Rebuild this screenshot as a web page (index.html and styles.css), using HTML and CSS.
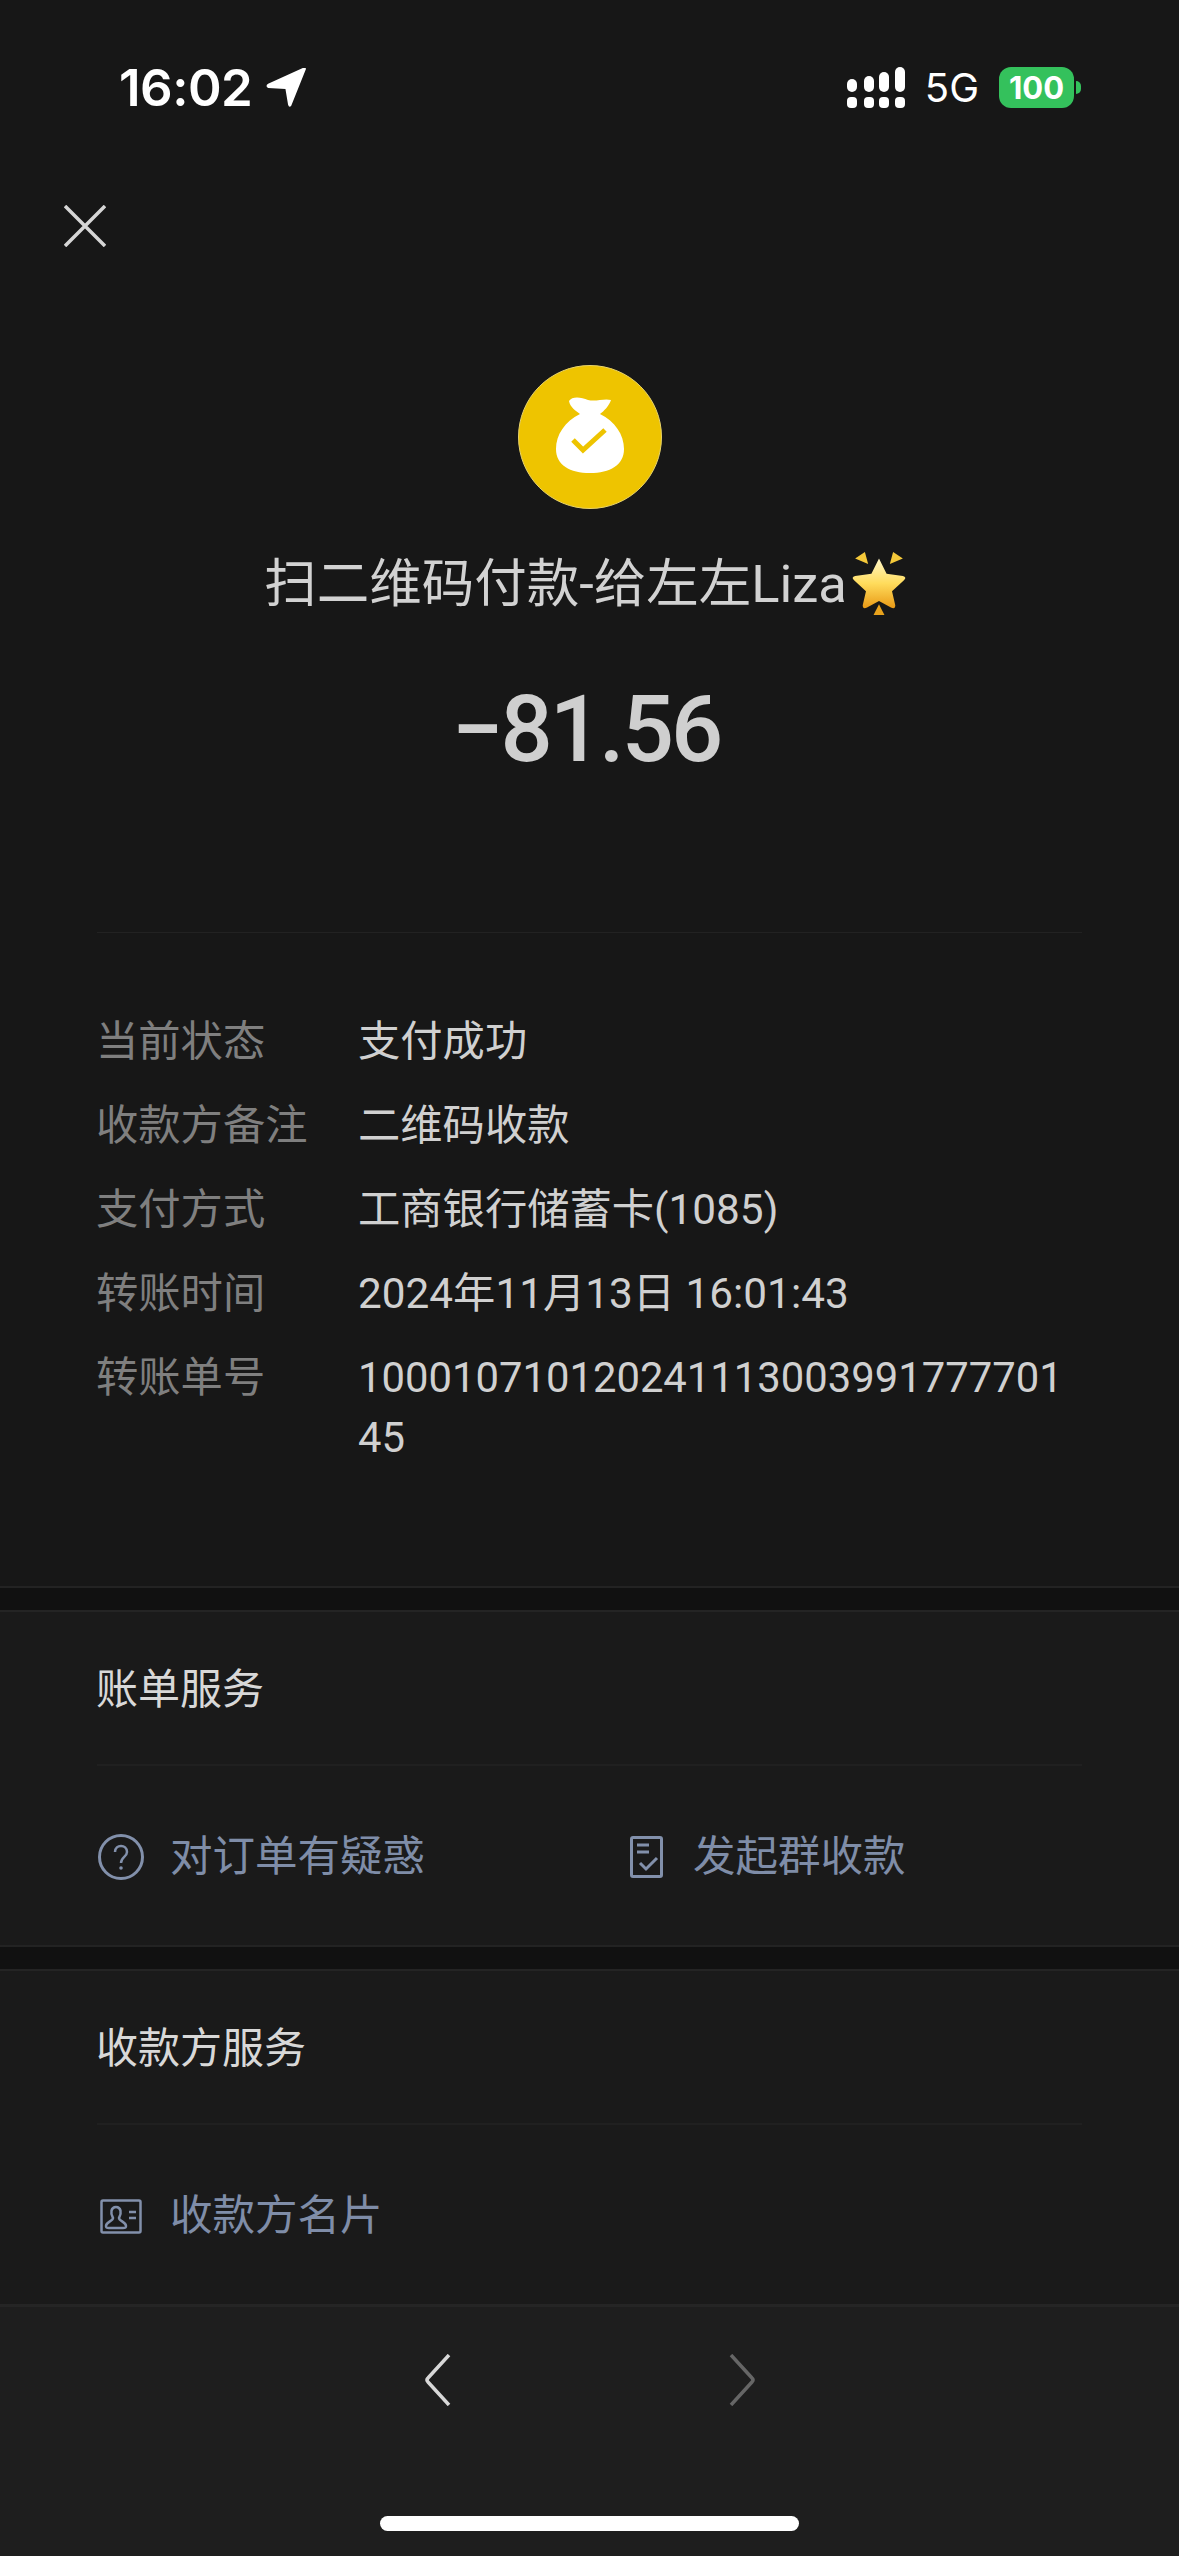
FILE: index.html
```html
<!DOCTYPE html>
<html lang="zh-CN">
<head>
<meta charset="utf-8">
<title>账单详情</title>
<link rel="stylesheet" href="styles.css">
</head>
<body>
<div class="page">
  <header class="status">
    <div class="status-left">
      <span class="time">16:02</span>
      <svg class="loc" viewBox="0 0 39 38"><path d="M38 1 L24 36 Q22 38 21 35 L18.500 20 L2 19 Q-1 17 2 15 L35 0 Q38 -1 38 1Z" fill="#fff"/></svg>
    </div>
    <div class="status-right">
      <svg class="signal" viewBox="0 0 58 41" fill="#fff">
        <rect x="0" y="12" width="10" height="13" rx="5"/><rect x="17" y="9" width="10" height="16" rx="5"/><rect x="32" y="5" width="10" height="20" rx="5"/><rect x="48" y="0" width="10" height="25" rx="5"/>
        <rect x="0" y="30" width="10" height="11" rx="4"/><rect x="17" y="30" width="10" height="11" rx="4"/><rect x="32" y="30" width="10" height="11" rx="4"/><rect x="48" y="30" width="10" height="11" rx="4"/>
      </svg>
      <span class="net">5G</span>
      <span class="battery">100</span>
    </div>
  </header>

  <svg class="close" viewBox="0 0 42 42"><path d="M1 1 L41 41 M41 1 L1 41" stroke="#d6d6d6" stroke-width="3.500" fill="none"/></svg>

  <section class="hero">
    <svg class="coin" viewBox="0 0 144 144">
      <circle cx="72" cy="72" r="71.500" fill="#eec400" stroke="#e8d36a" stroke-width="1"/>
      <path d="M51 36 C54 31 63 32 70 35 C78 37 86 33 93 35 C91 41 86 46 82 49 C97 56 106 70 106 84 C106 100 92 108 72 108 C52 108 38 100 38 84 C38 70 47 56 62 49 C58 46 52 42 51 36Z" fill="#fff"/>
      <path d="M55 75 L65 85 L87 65" fill="none" stroke="#eec400" stroke-width="5"/>
    </svg>
    <div class="title">
      <span>扫二维码付款-给左左Liza</span>
      <svg class="star" viewBox="0 0 52 59">
        <defs>
          <linearGradient id="starFill" x1="0" y1="0" x2="0" y2="1">
            <stop offset="0" stop-color="#fff6c8"/><stop offset="0.5" stop-color="#ffdc5c"/><stop offset="1" stop-color="#e99a16"/>
          </linearGradient>
        </defs>
        <path d="M26 7 L33 21 L48 23 Q52 24 49 27 L38 37 L41 50 Q41 54 37 52 L26 46 L15 52 Q11 54 11 50 L14 37 L3 27 Q0 24 4 23 L19 21 Z" fill="url(#starFill)"/>
        <path d="M4 7 L13 1 L16 12 Z M48 7 L39 1 L36 12 Z" fill="#f5c93a"/>
        <path d="M26 49 L31 59 L21 59 Z" fill="#e8a21c"/>
      </svg>
    </div>
    <div class="amount">−81.56</div>
  </section>

  <hr class="rule">

  <dl class="details">
    <div class="row"><dt>当前状态</dt><dd>支付成功</dd></div>
    <div class="row"><dt>收款方备注</dt><dd>二维码收款</dd></div>
    <div class="row"><dt>支付方式</dt><dd>工商银行储蓄卡(1085)</dd></div>
    <div class="row"><dt>转账时间</dt><dd>2024年11月13日 16:01:43</dd></div>
    <div class="row"><dt>转账单号</dt><dd class="wrap">10001071012024111300399177770145</dd></div>
  </dl>

  <div class="band"></div>

  <section class="service">
    <h2 class="service-head"><span>账单服务</span></h2>
    <div class="actions">
      <a class="action">
        <svg class="ico-help" viewBox="0 0 46 46" fill="none" stroke="#8290ab" stroke-width="3">
          <circle cx="23" cy="23" r="21.500"/>
          <path d="M17 18 C17 10 29 10 29 18 C29 23 23 23 23 29" stroke-width="2.500"/>
          <circle cx="23" cy="34" r="1.800" fill="#8290ab" stroke="none"/>
        </svg>
        <span>对订单有疑惑</span>
      </a>
      <a class="action action-doc">
        <svg class="ico-doc" viewBox="0 0 33 42" fill="none" stroke="#8290ab" stroke-width="3">
          <rect x="1.500" y="1.500" width="30" height="39" rx="1.500"/>
          <path d="M7 9 H19 M7 16 H19"/>
          <path d="M10 27 L16 33 L27 22"/>
        </svg>
        <span>发起群收款</span>
      </a>
    </div>
  </section>

  <div class="band"></div>

  <section class="service">
    <h2 class="service-head"><span>收款方服务</span></h2>
    <div class="actions">
      <a class="action">
        <svg class="ico-card" viewBox="0 0 42 35" fill="none" stroke="#8290ab" stroke-width="2.500">
          <rect x="1.500" y="1.500" width="39" height="32" rx="1.500"/>
          <path d="M16 8 C11 8 10 14 13 19 C13 22 6 23 6 27 C6 29 7 29 9 29 L23 29 C25 29 26 29 26 27 C26 23 19 22 19 19 C22 14 21 8 16 8Z"/>
          <path d="M29 13 H36 M29 19 H36"/>
        </svg>
        <span>收款方名片</span>
      </a>
    </div>
  </section>

  <footer class="bottom">
    <nav class="pager">
      <svg class="chev" viewBox="0 0 26 52"><path d="M24 1 L3 24 Q1 26 3 28 L24 51" stroke="#d8d8d8" stroke-width="3.500" fill="none"/></svg>
      <svg class="chev" viewBox="0 0 26 52"><path d="M2 1 L23 24 Q25 26 23 28 L2 51" stroke="#666" stroke-width="3.500" fill="none"/></svg>
    </nav>
    <div class="home"></div>
  </footer>
</div>
</body>
</html>
```

FILE: styles.css
```css
* { box-sizing: border-box; }
html, body { margin: 0; padding: 0; background: #171717; }
body {
  width: 1179px;
  height: 2556px;
  overflow: hidden;
  font-family: Roboto, "Noto Sans CJK SC", sans-serif;
  font-size: 42px;
  color: #d0d0d0;
}
.page {
  width: 1179px;
  height: 2556px;
  display: flex;
  flex-direction: column;
  background: #171717;
}
.status {
  margin-top: 67px;
  height: 41px;
  padding: 0 105px 0 119px;
  display: flex;
  justify-content: space-between;
  align-items: center;
  color: #fff;
  font-family: Inter, sans-serif;
  flex: none;
}
.status-left { display: flex; align-items: center; gap: 14px; }
.time { font-size: 51px; font-weight: 600; line-height: 41px; letter-spacing: -0.5px; }
.loc { width: 41px; height: 40px; display: block; }
.status-right { display: flex; align-items: center; }
.signal { width: 58px; height: 41px; display: block; }
.net { margin-left: 20px; font-size: 40px; line-height: 41px; }
.battery {
  position: relative;
  margin-left: 20px;
  width: 75px;
  height: 41px;
  border-radius: 12px;
  background: #34c15c;
  font-size: 31px;
  font-weight: 700;
  line-height: 41px;
  text-align: center;
  color: #fff;
}
.battery::after {
  content: "";
  position: absolute;
  right: -7px;
  top: 14px;
  width: 5px;
  height: 13px;
  background: #34c15c;
  border-radius: 0 6px 6px 0;
}
.close { width: 42px; height: 42px; margin: 97px 0 0 64px; display: block; flex: none; }
.hero {
  margin-top: 118px;
  display: flex;
  flex-direction: column;
  align-items: center;
  flex: none;
}
.coin { width: 144px; height: 144px; display: block; }
.title {
  margin-top: 42px;
  height: 60px;
  padding-right: 6px;
  display: flex;
  align-items: center;
  font-size: 52.5px;
  line-height: 60px;
  color: #d2d2d2;
}
.title span { position: relative; top: 3px; }
.star { width: 60px; height: 64px; display: block; margin-left: 2px; position: relative; top: 2px; }
.amount {
  margin-top: 69px;
  height: 100px;
  padding-right: 7px;
  font-size: 92px;
  font-weight: 500;
  line-height: 100px;
  letter-spacing: -3px;
  color: #cfcfcf;
}
.rule {
  margin: 152px 97px 0;
  height: 1px;
  border: 0;
  background: #222;
  flex: none;
}
.details {
  margin: 79px 0 0;
  padding: 0 96px;
  display: flex;
  flex-direction: column;
  gap: 24px;
  height: 574px;
  flex: none;
}
.row { display: flex; line-height: 60px; font-size: 42.3px; }
.row dt { width: 262px; color: #7f7f7f; flex: none; }
.row dd { margin: 0; color: #d0d0d0; }
.row .wrap { width: 708px; word-break: break-all; font-size: 41.8px; }
.band {
  height: 26px;
  background: #111;
  border-top: 2px solid #232323;
  border-bottom: 2px solid #242424;
  flex: none;
}
.service { background: #1a1a1a; flex: none; }
.service-head {
  margin: 0 97px;
  height: 154px;
  padding: 0 0 6px;
  display: flex;
  align-items: center;
  border-bottom: 2px solid #202020;
  font-size: 42px;
  font-weight: 400;
  color: #d8d8d8;
  text-indent: -1px;
}
.actions {
  height: 179px;
  padding: 3px 0 0 97px;
  display: flex;
  align-items: center;
}
.action {
  width: 533px;
  display: flex;
  align-items: center;
  color: #7f8da8;
  font-size: 42.5px;
  line-height: 60px;
}
.ico-help { width: 46px; height: 46px; margin-left: 1px; margin-right: 26px; display: block; }
.ico-doc { width: 33px; height: 42px; margin-right: 30px; display: block; }
.ico-card { width: 42px; height: 35px; margin-left: 3px; margin-right: 28px; display: block; }
.bottom {
  flex: 1;
  background: #1e1e1e;
  border-top: 3px solid #252525;
  display: flex;
  flex-direction: column;
  align-items: center;
}
.pager {
  margin-top: 47px;
  display: flex;
  gap: 278px;
}
.chev { width: 26px; height: 52px; display: block; }
.home {
  margin-top: 110px;
  width: 419px;
  height: 15px;
  border-radius: 8px;
  background: #fff;
}
```
